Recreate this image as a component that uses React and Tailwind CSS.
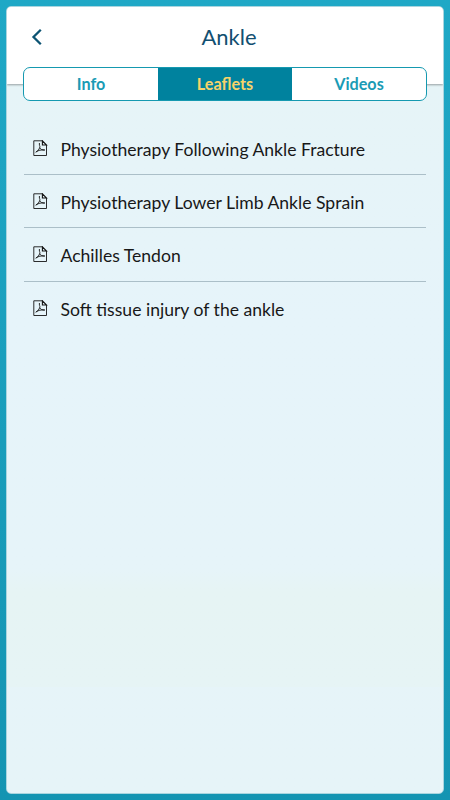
import React from 'react';

const tabs = ['Info', 'Leaflets', 'Videos'];

const leaflets = [
  'Physiotherapy Following Ankle Fracture',
  'Physiotherapy Lower Limb Ankle Sprain',
  'Achilles Tendon',
  'Soft tissue injury of the ankle',
];

function PdfIcon() {
  return (
    <svg width="15" height="17" viewBox="0 0 15 17" fill="none" stroke="#151515" className="-mt-1 shrink-0">
      <path d="M9.5 0.8H0.8V15.5H13.5V5" strokeWidth="0.9" />
      <path d="M9.4 0.8V5H13.5L9.4 0.8Z" strokeWidth="1.1" />
      <path d="M6.4 3V5.2C7 6 7 6.8 6.6 7.8C6 9.4 4.8 11.2 2.6 12.3M6.8 7.6C7.6 9.3 9 10.2 12 10M3.2 11.7C5.5 10.3 8 9.7 11.6 10" strokeWidth="0.9" />
    </svg>
  );
}

export default function App() {
  return (
    <div className="h-[800px] w-[450px] bg-linear-to-b from-[#1fa8c6] to-[#1494b2] p-1.5 font-['Lato',sans-serif]">
      <div className="flex h-[788px] w-[438px] flex-col overflow-hidden rounded-[5px] border border-[#a9d5df] bg-linear-to-b from-[#e6f4f7] from-10% via-[#e6f4fa] via-40% to-[#e6f4f8]">
        <header className="relative h-[77px] shrink-0 bg-white shadow-[0_1px_2px_rgba(0,0,0,0.35)]">
          <h1 className="pt-3.5 pl-2 text-center text-[22px] leading-8 text-[#124f71]">Ankle</h1>
          <button className="absolute top-[21px] left-[24px]" aria-label="Back">
            <svg width="12" height="18" viewBox="0 0 12 18" fill="none" stroke="#0c5473" strokeWidth="2.3">
              <path d="M9.8 1.8L2.5 9L9.8 16.2" />
            </svg>
          </button>
        </header>

        <nav className="relative -mt-[17px] ml-4 flex h-[34px] w-[404px] shrink-0 overflow-hidden rounded-[7px] border border-[#1599b0] bg-white">
          {tabs.map((tab) => (
            <button
              key={tab}
              className={
                tab === 'Leaflets'
                  ? 'flex-1 bg-[#00829e] text-[16.2px] font-bold text-[#f7d36a]'
                  : 'flex-1 text-[16.2px] font-bold text-[#1a9bb5]'
              }
            >
              {tab}
            </button>
          ))}
        </nav>

        <ul className="mt-[21px] mr-[17px] ml-[17px]">
          {leaflets.map((title) => (
            <li
              key={title}
              className="flex h-[53.2px] items-center gap-[12.5px] border-b border-[#abbfc8] pt-1 pl-[9px] last:border-b-0"
            >
              <PdfIcon />
              <span className="text-[17.58px] text-[#181818]">{title}</span>
            </li>
          ))}
        </ul>

        {/* faint green tint towards the bottom of the card */}
        <div className="mt-[234px] h-[118px] shrink-0 bg-linear-to-b from-transparent via-[#e6f4f4] via-20% to-[#e6f4f5]" />
      </div>
    </div>
  );
}
